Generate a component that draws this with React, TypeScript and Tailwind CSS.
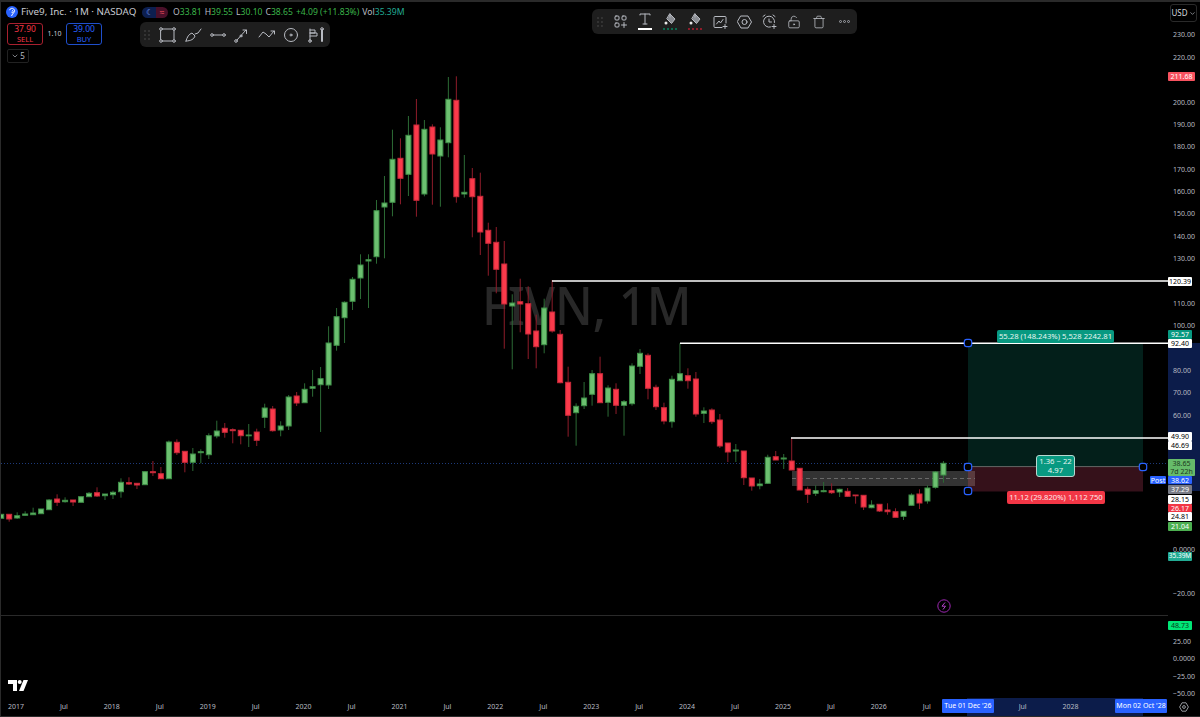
import React from "react";
import { ChevronDown, Trash, LockKeyholeOpen } from "lucide-react";

// body top, body bottom, wick top, wick bottom, direction (pixel y on the page)
type Candle = [number, number, number, number, "g" | "r"];

const candles: Candle[] = [
  [514.3, 518.3, 514, 518.3, "g"], [514.3, 519, 514, 521.7, "r"], [515.7, 518, 512.3, 519, "g"], [514, 515.3, 511.3, 515.7, "g"],
  [513, 514.7, 507.7, 514.7, "g"], [509, 513.7, 509, 513.7, "g"], [500, 509.7, 499, 510, "g"], [499, 502.3, 494.3, 506, "r"],
  [500.3, 501.7, 497.3, 502.7, "g"], [500, 502, 500, 506, "r"], [496.7, 502.3, 496.7, 502.3, "g"], [493.3, 496.7, 492, 496.7, "g"],
  [492.7, 496, 487.3, 497, "r"], [494, 495.7, 494, 500, "g"], [492.3, 494.7, 490.7, 499, "g"], [482.3, 491.7, 478.3, 497.7, "g"],
  [482.7, 484, 477.3, 485, "r"], [483.3, 485, 483, 489, "r"], [471.7, 484.7, 471, 485, "g"], [471.7, 472.7, 461, 476, "r"],
  [473.7, 478.7, 467, 478.7, "r"], [442, 478.7, 440.5, 478.7, "g"], [442.3, 452.7, 439.3, 455, "r"], [451.3, 462.3, 451, 472.3, "r"],
  [454, 462.3, 448, 471, "g"], [451.7, 452.7, 449.3, 463.3, "g"], [435.7, 454.7, 433.3, 459, "g"], [431, 436, 420.7, 438.3, "g"],
  [428.3, 432.3, 423, 437.7, "r"], [429.7, 430.7, 428.3, 443.3, "r"], [430.3, 435.7, 430.3, 444.3, "r"], [435, 435.7, 424, 447, "g"],
  [432, 440.3, 428.7, 446, "r"], [408, 417.3, 403.7, 428, "g"], [409, 430.7, 406, 431.7, "r"], [426, 430, 421.3, 436.3, "g"],
  [397, 426, 395, 430, "g"], [396, 403, 392, 406, "r"], [389.3, 402.7, 383.3, 402.7, "g"], [386.7, 388.3, 370, 396.7, "g"],
  [378.7, 384.7, 367, 432, "g"], [343, 385, 326.3, 389, "g"], [316.7, 345.3, 308, 350.7, "g"], [302.3, 317.7, 301.3, 343, "g"],
  [279.3, 301.3, 277, 310, "g"], [265, 278, 254.3, 299, "g"], [259.7, 261, 254.3, 308, "g"], [210.7, 256.7, 200, 263.7, "g"],
  [203, 207, 176, 258.3, "g"], [159.3, 202.3, 129.7, 216.3, "g"], [158.3, 178.3, 138.3, 204.3, "r"], [135.3, 174.3, 116, 196, "g"],
  [125, 200.3, 99, 216.7, "r"], [129.3, 194, 120, 196.3, "g"], [127, 154, 124.3, 204.7, "r"], [140, 156, 127.3, 206.7, "g"],
  [99.3, 142.7, 77, 157.3, "g"], [100.3, 196.7, 76.3, 202.7, "r"], [192.3, 194, 155, 197.7, "g"], [178.7, 196.7, 168, 237.3, "r"],
  [196.3, 232, 172.7, 255, "r"], [230.3, 243.3, 222.7, 275.7, "r"], [242.3, 269.3, 227, 293.3, "r"], [264, 304, 241, 348.7, "r"],
  [303, 306, 294.3, 369.3, "g"], [301.7, 304, 278.7, 332.3, "r"], [303.7, 334, 286.3, 359, "r"], [331, 346.7, 314.7, 368.3, "r"],
  [308, 344.7, 298.7, 353.3, "g"], [312, 331, 280, 332.7, "r"], [334.3, 382.7, 330, 383.3, "r"], [382.3, 415.3, 366.7, 436.7, "r"],
  [406.3, 412.7, 403.3, 445.7, "g"], [398, 405.7, 382, 409, "g"], [373.7, 394.3, 370, 405.7, "g"], [373.7, 402.7, 356.7, 402.7, "r"],
  [388, 402.3, 385.3, 416.7, "g"], [389.3, 405.3, 383.3, 414, "r"], [401.7, 405.3, 400, 435.7, "g"], [366, 403.7, 363.3, 405.7, "g"],
  [353.3, 366.3, 349, 374, "g"], [355.3, 388.3, 353.3, 399.3, "r"], [387.3, 406.7, 384.7, 410, "r"], [407.7, 421, 402.7, 424.3, "r"],
  [379.3, 421.7, 375.7, 427.7, "g"], [373.7, 380.7, 343.3, 380.7, "g"], [375.7, 380.7, 368.3, 388.7, "r"], [379, 414, 372, 416.7, "r"],
  [411, 413.3, 407.3, 423, "g"], [410, 421.7, 408.3, 424, "r"], [420, 446, 414, 448, "r"], [443, 452, 443, 462, "r"],
  [450, 451, 444, 462, "g"], [451, 477.7, 451, 485, "r"], [478, 486, 478, 490.7, "r"], [484, 485.7, 479, 489.3, "g"],
  [457.3, 483.3, 454.7, 484, "g"], [456.7, 460, 451, 460, "r"], [458, 459, 454, 469, "g"], [461, 470, 438, 470, "r"],
  [468.3, 490, 468.3, 490, "r"], [489.3, 494.3, 486.7, 503, "r"], [490.7, 493.3, 485.3, 496, "g"], [490.7, 491.7, 482, 492.3, "g"],
  [490.7, 492.7, 483.3, 494, "r"], [489.3, 492, 488.7, 497, "g"], [491.3, 496.3, 488, 497, "r"], [495, 495.7, 495, 503.7, "r"],
  [495.3, 507, 495, 510, "r"], [505, 507.7, 500.3, 508.3, "g"], [504.3, 511, 504, 512, "r"], [510, 511.7, 503.3, 514.7, "r"],
  [511.7, 517.3, 508.3, 517.3, "r"], [511.3, 516.3, 511.3, 520, "g"], [495, 505.3, 493.3, 505.7, "g"], [494, 503, 489.3, 509, "r"],
  [488, 501, 485.3, 503.7, "g"], [472, 487.3, 471, 488.7, "g"], [463.3, 475, 461, 482.7, "g"],
];

// ticks that sit under a flag in the screenshot are left empty
const priceTicks = ["230.00", "220.00", "", "200.00", "190.00", "180.00", "170.00", "160.00", "150.00", "140.00", "130.00", "", "110.00", "100.00", "", "80.00", "70.00", "60.00", "", "", "", "", "", "0.0000", "", "\u221220.00"];
const timeTicks = ["2017", "Jul", "2018", "Jul", "2019", "Jul", "2020", "Jul", "2021", "Jul", "2022", "Jul", "2023", "Jul", "2024", "Jul", "2025", "Jul", "2026", "Jul", "", "Jul", "2028"];

const flags = [
  { text: "211.68", cls: "top-[70px] h-[9px] w-[27px] bg-[#f7525f] text-white" },
  { text: "120.39", cls: "top-[275px] h-[9px] w-[24px] bg-white text-black" },
  { text: "92.57", cls: "top-[328px] h-[9px] w-[24px] bg-[#089981] text-white" },
  { text: "92.40", cls: "top-[337px] h-[9px] w-[24px] bg-white text-black" },
  { text: "49.90", cls: "top-[430px] h-[9px] w-[24px] bg-white text-black" },
  { text: "46.69", cls: "top-[439px] h-[9px] w-[24px] bg-white text-black" },
  { text: "38.62", cls: "top-[474px] h-[8px] w-[24px] bg-[#2962ff] text-white" },
  { text: "37.29", cls: "top-[483px] h-[9px] w-[24px] bg-[#787b86] text-white" },
  { text: "28.15", cls: "top-[493px] h-[9px] w-[24px] bg-white text-black" },
  { text: "26.17", cls: "top-[502px] h-[8px] w-[24px] bg-[#f23645] text-white" },
  { text: "24.81", cls: "top-[510px] h-[9px] w-[24px] bg-white text-black" },
  { text: "21.04", cls: "top-[520px] h-[9px] w-[24px] bg-[#4caf50] text-white" },
  { text: "35.39M", cls: "top-[550px] h-[9px] w-[24px] bg-[#22ab94] text-[6.5px] text-white" },
];

const iconProps = {
  fill: "none",
  stroke: "#b8bbc2",
  strokeWidth: 1,
  strokeLinecap: "round" as const,
  strokeLinejoin: "round" as const,
};

const Grip = () => (
  <svg width="6" height="10" viewBox="0 0 6 10" fill="#4a4a4a">
    {[1, 5].map((x) =>
      [1, 5, 9].map((y) => <rect key={`${x}${y}`} x={x - 0.7} y={y - 0.7} width="1.4" height="1.4" />)
    )}
  </svg>
);

const DrawingTools = () => (
  <div className="absolute left-[139px] top-[22px] flex h-[25px] w-[190px] items-center rounded-md bg-[#1e1e1e] pl-[4px]">
    <Grip />
    <svg width="180" height="25" viewBox="144 22 180 25" {...iconProps} className="-ml-[6px]">
      <rect x="161" y="29" width="13" height="12" />
      <circle cx="161" cy="29" r="1.3" fill="#1e1e1e" />
      <circle cx="174" cy="29" r="1.3" fill="#1e1e1e" />
      <circle cx="161" cy="41" r="1.3" fill="#1e1e1e" />
      <circle cx="174" cy="41" r="1.3" fill="#1e1e1e" />
      <path d="M186 41c1-4 3-7 6-8l3 3c-1 3-4 5-9 5zM195 34l3-1 3-4" />
      <circle cx="212" cy="35" r="1.3" />
      <circle cx="224" cy="35" r="1.3" />
      <path d="M213.5 35h9" />
      <circle cx="236" cy="41" r="1.3" />
      <circle cx="241" cy="36" r="1" />
      <path d="M237 40l9-10M243 30h3.5v3.5" />
      <path d="M259 37l4-5 3 2 3 3 5-6M271 31h3.5v3" />
      <circle cx="291" cy="35" r="6.5" />
      <circle cx="291" cy="35" r="1" />
      <path d="M310 29v12M310 30h5v3h-5M310 33h7v3h-7" />
      <circle cx="310" cy="41" r="1.3" />
      <path d="M322 30v11" strokeWidth="2" />
      <circle cx="322" cy="29" r="1.3" />
    </svg>
  </div>
);

const Bucket = ({ color }: { color: string }) => (
  <div className="flex w-[25px] flex-col items-center">
    <svg width="14" height="13" viewBox="0 0 14 13" {...iconProps}>
      <path d="M7 1l5 5-3.5 4.5L4 6z" fill="#8a8d93" />
      <path d="M7 1v3" />
      <circle cx="3" cy="10" r="1.5" fill="#e8e8e8" stroke="none" />
    </svg>
    <div className={`mt-[2px] h-[2px] w-[14px] border-t-2 border-dotted ${color}`} />
  </div>
);

const ObjectTools = () => (
  <div className="absolute left-[591px] top-[9px] flex h-[25px] w-[265px] items-center rounded-md bg-[#1e1e1e] pl-[5px]">
    <Grip />
    <div className="ml-[6px] flex w-[24px] justify-center">
      <svg width="13" height="13" viewBox="0 0 13 13" {...iconProps}>
        <rect x="1" y="1" width="4" height="4" rx="1" />
        <rect x="8" y="1" width="4" height="4" rx="1" />
        <rect x="1" y="8" width="4" height="4" rx="1" />
        <path d="M10 7.5v5M7.5 10h5" />
      </svg>
    </div>
    <div className="flex w-[25px] flex-col items-center">
      <svg width="12" height="12" viewBox="0 0 12 12" {...iconProps}>
        <path d="M1 2V1h10v1M6 1v10M4 11h4" />
      </svg>
      <div className="mt-[3px] h-[2px] w-[14px] bg-white" />
    </div>
    <Bucket color="border-[#0b6b4f]" />
    <Bucket color="border-[#8e1c2a]" />
    <div className="flex w-[25px] justify-center">
      <svg width="15" height="14" viewBox="0 0 15 14" {...iconProps}>
        <path d="M9 12.5H2a1 1 0 0 1-1-1v-9a1 1 0 0 1 1-1h10a1 1 0 0 1 1 1V8" />
        <path d="M3.5 9L6 6l1.5 2L10 4.5" />
        <path d="M12 9.5v4M10 11.5h4" />
      </svg>
    </div>
    <div className="flex w-[25px] justify-center">
      <svg width="15" height="14" viewBox="0 0 15 14" {...iconProps}>
        <path d="M4 1h7l3.5 6-3.5 6H4L.5 7z" />
        <circle cx="7.5" cy="7" r="2.5" />
      </svg>
    </div>
    <div className="flex w-[24px] justify-center">
      <svg width="15" height="15" viewBox="0 0 15 15" {...iconProps}>
        <path d="M8.5 13a5.5 5.5 0 1 1 4-4.5" />
        <path d="M7 5v3h2.5M1 2.5L3 1M11 1l2 1.5M12 10.5v4M10 12.5h4" />
      </svg>
    </div>
    <div className="flex w-[25px] justify-center">
      <LockKeyholeOpen size={14} strokeWidth={1.4} color="#b8bbc2" />
    </div>
    <div className="flex w-[25px] justify-center">
      <Trash size={14} strokeWidth={1.4} color="#b8bbc2" />
    </div>
    <div className="flex w-[26px] justify-center gap-[1px]">
      <i className="h-[3px] w-[3px] rounded-full border border-[#a0a3a9]" />
      <i className="h-[3px] w-[3px] rounded-full border border-[#a0a3a9]" />
      <i className="h-[3px] w-[3px] rounded-full border border-[#a0a3a9]" />
    </div>
  </div>
);

const Legend = () => (
  <div className="absolute left-[5px] top-[3px] flex flex-col font-['Noto_Sans',sans-serif]">
    <div className="flex h-[18px] items-center">
      <svg width="12" height="12" viewBox="0 0 12 12" className="mr-[3px]">
        <circle cx="6" cy="6" r="6" fill="#2962ff" />
        <path d="M3.5 4.2a2.6 2.6 0 1 1 3.4 3.2L5.5 10M6 4.5a1 1 0 1 1-.6 1.6" fill="none" stroke="#fff" strokeWidth="1" />
      </svg>
      <span className="w-[121px] text-[9.8px] text-[#c8cad0]">Five9, Inc. · 1M · NASDAQ</span>
      <div className="flex h-[11px] w-[26px] overflow-hidden rounded-full">
        <div className="flex w-[14px] items-center justify-center bg-[#0d1f4f] text-[8px] leading-none text-[#7ea6ff]">☾</div>
        <div className="flex w-[12px] items-center justify-center bg-[#4a1029] text-[8px] leading-none text-[#f7525f]">≈</div>
      </div>
      <div className="ml-[5px] flex gap-[3px] whitespace-nowrap text-[8.6px] text-[#3bb54a]">
        <span><b className="font-normal text-[#b8bbc2]">O</b>33.81</span>
        <span><b className="font-normal text-[#b8bbc2]">H</b>39.55</span>
        <span><b className="font-normal text-[#b8bbc2]">L</b>30.10</span>
        <span><b className="font-normal text-[#b8bbc2]">C</b>38.65</span>
        <span>+4.09 (+11.83%)</span>
        <span><b className="font-normal text-[#b8bbc2]">Vol</b><span className="text-[#22ab94]">35.39M</span></span>
      </div>
    </div>
    <div className="mt-[2px] flex items-center">
      <div className="ml-[1px] flex h-[22px] w-[36px] flex-col items-center justify-center rounded-[3px] border border-[#a8202f] text-[8px] leading-[10px] text-[#f23645]">
        <span className="text-[8.5px]">37.90</span>
        <span className="text-[7.5px]">SELL</span>
      </div>
      <span className="w-[23px] text-center text-[7px] text-[#c8cad0]">1.10</span>
      <div className="flex h-[22px] w-[36px] flex-col items-center justify-center rounded-[3px] border border-[#1f4fcc] text-[8px] leading-[10px] text-[#2962ff]">
        <span className="text-[8.5px]">39.00</span>
        <span className="text-[7.5px]">BUY</span>
      </div>
    </div>
    <div className="ml-[1px] mt-[4px] flex h-[14px] w-[22px] items-center justify-center gap-[1px] rounded-[2px] border border-[#222] text-[8px] text-[#b8bbc2]">
      <ChevronDown size={8} />
      5
    </div>
  </div>
);

const Handle = ({ x, y }: { x: number; y: number }) => (
  <rect x={x - 3.7} y={y - 3.7} width="7.4" height="7.4" rx="2.4" fill="#000" stroke="#2962ff" strokeWidth="1.2" />
);

const Chart = () => (
  <svg viewBox="1 2 1167 613" className="block h-[613px] w-[1167px]">
    <line x1="1" y1="463.5" x2="1168" y2="463.5" stroke="#1d3a7a" strokeWidth="1" strokeDasharray="1 2" />
    <rect x="968" y="343" width="175" height="124" fill="#031f1a" />
    <rect x="968" y="467" width="175" height="24.5" fill="#35111a" />
    <rect x="792" y="471" width="183" height="15" fill="#333333" />
    <rect x="968" y="471" width="7" height="15" fill="#5a3a3e" />
    <line x1="792" y1="478.5" x2="975" y2="478.5" stroke="#777" strokeWidth="0.8" strokeDasharray="4 3" />
    {candles.map(([top, bottom, wickTop, wickBottom, dir], i) => {
      const x = 1.2 + i * 7.985;
      const up = dir === "g";
      return (
        <g key={i}>
          <line x1={x} y1={wickTop} x2={x} y2={wickBottom} stroke={up ? "#2c6b35" : "#8e1c2a"} strokeWidth="1" />
          <rect x={x - 2.5} y={top} width="5" height={Math.max(bottom - top, 0.8)} fill={up ? "#6cc070" : "#fb3a4b"} stroke={up ? "#3f8f48" : "#c72a3a"} strokeWidth="1" />
        </g>
      );
    })}
    <line x1="552" y1="281" x2="1168" y2="281" stroke="#fff" strokeWidth="1.5" />
    <line x1="680" y1="343.3" x2="1168" y2="343.3" stroke="#fff" strokeWidth="1.5" />
    <line x1="791" y1="438" x2="1168" y2="438" stroke="#fff" strokeWidth="1.5" />
    <line x1="968" y1="466.6" x2="1143" y2="466.6" stroke="#666" strokeWidth="1" />
    <Handle x={968} y={343} />
    <Handle x={968} y={467} />
    <Handle x={1143} y={467} />
    <Handle x={968} y={491} />
  </svg>
);

const App = () => {
  return (
    <div className="relative flex h-[717px] w-[1200px] flex-col overflow-hidden border-b border-l border-[#2a2a2a] bg-black font-['Noto_Sans',sans-serif]">
      <div className="h-[2px] bg-[#2a2a2a]" />
      <div className="flex flex-1">
        <div className="flex w-[1167px] flex-col">
          <div className="relative h-[613px]">
            <div className="absolute left-[481px] top-[267px] origin-left scale-x-[0.92] whitespace-nowrap text-[53px] font-medium leading-[72px] text-[#282828]">FIVN, 1M</div>
            <div className="relative">
              <Chart />
            </div>
          </div>
          <div className="h-[1px] bg-[#2a2a2a]" />
          <div className="flex-1" />
        </div>
        <div className="relative w-[32px] text-[7px] leading-none text-[#b8bbc2]">
          <div className="absolute left-0 top-[341px] h-[148px] w-full bg-[#0c1c4a]" />
          <div className="relative flex flex-col pt-[21.8px]">
            {priceTicks.map((t, i) => (
              <div key={i} className="flex h-[22.36px] items-center pl-[5px]">{t}</div>
            ))}
          </div>
          <div className="absolute left-0 top-[614px] flex w-full flex-col">
            <div className="h-[17px]" />
            {["25.00", "0.0000", "\u221225.00", "\u221250.00"].map((t) => (
              <div key={t} className="flex h-[17.3px] items-center pl-[5px]">{t}</div>
            ))}
          </div>
          {flags.map((f) => (
            <div key={f.text} className={`absolute left-0 flex items-center justify-center rounded-[1px] ${f.cls}`}>{f.text}</div>
          ))}
          <div className="absolute left-0 top-[457px] flex h-[17px] w-[27px] flex-col items-center justify-center rounded-[1px] bg-[#66bb6a] leading-[8px] text-[#1b3a1e]">
            <span>38.65</span>
            <span>7d 22h</span>
          </div>
          <div className="absolute -left-[18px] top-[474px] flex h-[8px] w-[16px] items-center justify-center rounded-[1px] bg-[#2962ff] text-white">Post</div>
          <div className="absolute left-0 top-[619px] flex h-[9px] w-[24px] items-center justify-center rounded-[1px] bg-[#00e676] text-[#0a3a20]">48.73</div>
        </div>
      </div>
      <div className="relative flex h-[18px] text-[7px] text-[#b8bbc2]">
        <div className="absolute left-[966px] top-0 h-full w-[176px] bg-[#0c1c4a]" />
        <div className="relative -ml-[9px] flex items-center">
          {timeTicks.map((t, i) => (
            <div key={i} className="w-[47.95px] text-center">{t}</div>
          ))}
        </div>
        <div className="absolute left-[941px] top-[1px] flex h-[14px] w-[52px] items-center justify-center whitespace-nowrap rounded-[1px] bg-[#2962ff] text-white">Tue 01 Dec '26</div>
        <div className="absolute left-[1114px] top-[1px] flex h-[14px] w-[52px] items-center justify-center whitespace-nowrap rounded-[1px] bg-[#2962ff] text-white">Mon 02 Oct '28</div>
        <svg width="10" height="10" viewBox="0 0 10 10" fill="none" stroke="#b8bbc2" strokeWidth="0.8" className="absolute left-[1178px] top-[4px]">
          <path d="M3 .8h4L9.4 5 7 9.2H3L.6 5z" />
          <circle cx="5" cy="5" r="1.4" />
        </svg>
      </div>

      <svg width="20" height="11" viewBox="0 0 20 11" fill="#fff" className="absolute left-[7px] top-[680px]">
        <path d="M0 0h9v11H5V4H0z" />
        <circle cx="11.7" cy="2" r="2" />
        <path d="M15.5 0H20l-4.5 11H11z" />
      </svg>

      <svg width="14" height="14" viewBox="0 0 14 14" fill="none" className="absolute left-[936px] top-[599px]">
        <circle cx="7" cy="7" r="6.2" stroke="#9c27b0" strokeWidth="1" />
        <path d="M8 3.5L5 7.2h3.5L6 10.5" stroke="#b341c9" strokeWidth="1" />
      </svg>

      <Legend />
      <DrawingTools />
      <ObjectTools />

      <div className="absolute left-[1169px] top-[4px] flex h-[18px] w-[27px] items-center justify-center gap-[1px] rounded-[3px] border border-[#2a2a2a] text-[8px] text-[#d1d4dc]">
        USD
        <ChevronDown size={7} />
      </div>

      <div className="absolute left-[996px] top-[330px] flex h-[13px] w-[117px] items-center justify-center whitespace-nowrap rounded-[2px] bg-[#089981] text-[7.7px] text-[#e6f5f0]">55.28 (148.243%) 5,528 2242.81</div>
      <div className="absolute left-[1035px] top-[455px] flex h-[22px] w-[39px] flex-col items-center justify-center rounded-[3px] border border-[#b8d8d0] bg-[#089981] text-[7.7px] leading-[9px] text-[#e6f5f0]">
        <span>1.36 ~ 22</span>
        <span>4.97</span>
      </div>
      <div className="absolute left-[1006px] top-[491px] flex h-[13px] w-[98px] items-center justify-center whitespace-nowrap rounded-[2px] bg-[#f23645] text-[7.7px] text-[#fde8ea]">11.12 (29.820%) 1,112 750</div>
    </div>
  );
};

export default App;
